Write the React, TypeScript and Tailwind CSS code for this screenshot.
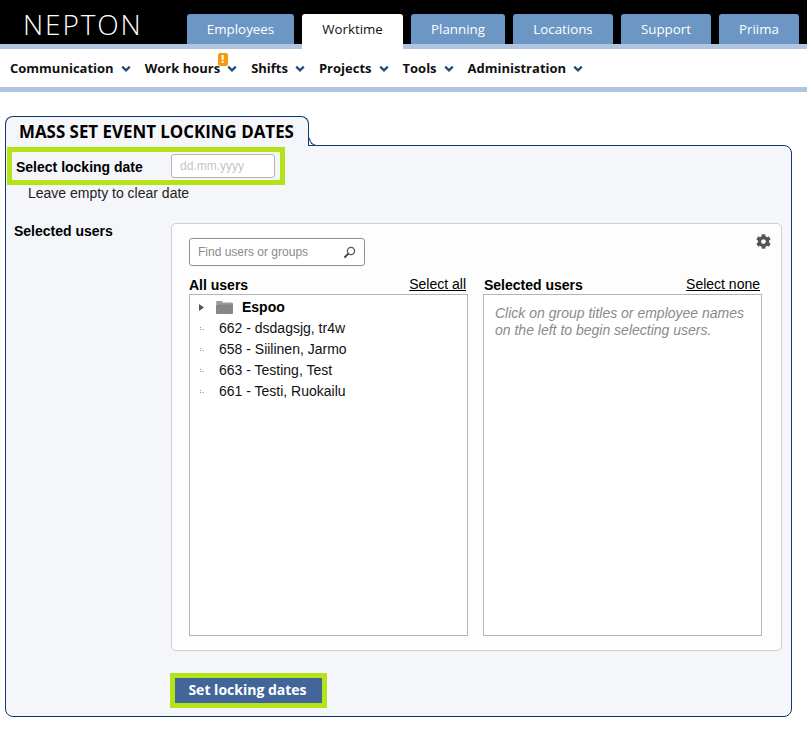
import React from 'react';
import { FaCog } from 'react-icons/fa';

const tabs = [
  { label: 'Employees', width: 'w-[107px]' },
  { label: 'Worktime', width: 'w-[101px]', active: true },
  { label: 'Planning', width: 'w-[94px]' },
  { label: 'Locations', width: 'w-[100px]' },
  { label: 'Support', width: 'w-[90px]' },
  { label: 'Priima', width: 'w-[80px]' },
];

const menu = ['Communication', 'Work hours', 'Shifts', 'Projects', 'Tools', 'Administration'];

const users = ['662 - dsdagsjg, tr4w', '658 - Siilinen, Jarmo', '663 - Testing, Test', '661 - Testi, Ruokailu'];

function Chevron() {
  return (
    <svg width="10" height="8" viewBox="0 0 10 8" className="ml-[7px]">
      <path d="M1.2 1.6 5 5.4l3.8-3.8" fill="none" stroke="#1f4a7c" strokeWidth="2.2" />
    </svg>
  );
}

function TreeDots() {
  return (
    <svg width="5" height="5" viewBox="0 0 5 5" className="ml-[10px] mr-[14px] shrink-0">
      <rect x="0" y="1" width="1" height="1" fill="#9a9a9a" />
      <rect x="0" y="3" width="1" height="1" fill="#9a9a9a" />
      <rect x="2" y="3" width="1" height="1" fill="#bdbdbd" />
      <rect x="3" y="3" width="1" height="1" fill="#bdbdbd" />
    </svg>
  );
}

function Header() {
  return (
    <div>
      <div className="flex h-[44px] bg-black">
        <div className="w-[187px] pl-[23px] pt-[5px] font-['Open_Sans',sans-serif] text-[28px] leading-[38px] font-light tracking-[1.9px] text-white">
          NEPTON
        </div>
        <div className="flex items-start gap-2 pt-[14px]">
          {tabs.map((tab) =>
            tab.active ? (
              <div
                key={tab.label}
                className={`${tab.width} relative z-10 flex h-[35px] justify-center rounded-t-[3px] bg-white pt-[6px] font-['Open_Sans',sans-serif] text-[13.33px] leading-[18px] text-[#111111]`}
              >
                {tab.label}
              </div>
            ) : (
              <div
                key={tab.label}
                className={`${tab.width} flex h-[30px] justify-center rounded-t-[3px] bg-[#6c97c4] pt-[6px] font-['Open_Sans',sans-serif] text-[13.33px] leading-[18px] text-white`}
              >
                {tab.label}
              </div>
            ),
          )}
        </div>
      </div>
      <div className="h-[5px] bg-[#b0c6e0]" />
      <div className="flex h-[38px] items-center gap-[14px] bg-white pt-[1px] pl-[10px] font-['Open_Sans',sans-serif] text-[13px] font-bold text-[#111111]">
        {menu.map((item) => (
          <div key={item} className="relative flex items-center">
            {item}
            <Chevron />
            {item === 'Work hours' && (
              <span className="absolute top-[-6px] left-[73px] flex h-[13px] w-[10px] items-center justify-center rounded-[2px] bg-[#f59a0c] text-[10px] leading-none font-extrabold text-white">
                !
              </span>
            )}
          </div>
        ))}
      </div>
      <div className="h-[5px] bg-[#b0c6e0]" />
    </div>
  );
}

function UserPicker() {
  return (
    <div className="relative h-[428px] w-[611px] rounded-[5px] border border-[#cfcfcf] bg-[#fdfdfe] pt-[14px] pl-[17px]">
      <FaCog className="absolute top-[10px] right-[10px] text-[15px] text-[#555555]" />
      <div className="flex h-[28px] w-[176px] items-center justify-between rounded-[3px] border border-[#8f8f8f] bg-white pr-[8px] pl-[8px] text-[12px] text-[#8a8a8a]">
        <span>Find users or groups</span>
        <svg width="13" height="13" viewBox="0 0 13 13">
          <circle cx="8" cy="5" r="3.6" fill="none" stroke="#555555" strokeWidth="1.3" />
          <path d="M5.4 7.6 1.4 11.6" stroke="#444444" strokeWidth="2" />
        </svg>
      </div>
      <div className="mt-[9px] flex gap-[15px]">
        <div className="w-[279px]">
          <div className="flex h-[19px] items-end justify-between pr-[2px] text-[14px] leading-[18px] text-black">
            <span className="font-bold">All users</span>
            <span className="relative top-[-1px] underline">Select all</span>
          </div>
          <div className="h-[342px] border border-[#b5b5b5] bg-white pt-[2px] text-[14px] text-[#111111]">
            <div className="flex h-[21px] items-center">
              <svg width="5" height="7" viewBox="0 0 5 7" className="ml-[9px]">
                <path d="M0 0l5 3.5L0 7z" fill="#555555" />
              </svg>
              <svg width="17" height="13" viewBox="0 0 17 13" className="ml-[12px]">
                <path d="M0 2V1.2C0 .5.5 0 1.2 0h4C6 0 6.400.5 6.800 1.500H15.500c.8 0 1.500.5 1.500 1.300V4H1.500z" fill="#9a9a9a" />
                <path d="M0 3.500h17V12c0 .6-.4 1-1 1H1c-.6 0-1-.4-1-1z" fill="#868686" />
              </svg>
              <span className="ml-[9px] font-bold text-black">Espoo</span>
            </div>
            {users.map((user) => (
              <div key={user} className="flex h-[21px] items-center">
                <TreeDots />
                {user}
              </div>
            ))}
          </div>
        </div>
        <div className="w-[279px]">
          <div className="flex h-[19px] items-end justify-between pr-[2px] pl-[1px] text-[14px] leading-[18px] text-black">
            <span className="font-bold">Selected users</span>
            <span className="relative top-[-1px] underline">Select none</span>
          </div>
          <div className="h-[342px] border border-[#b5b5b5] bg-white px-[11px] pt-[10px] text-[14px] leading-[17px] text-[#8a8a8a] italic">
            Click on group titles or employee names
            <br />
            on the left to begin selecting users.
          </div>
        </div>
      </div>
    </div>
  );
}

function MassLockingPanel() {
  return (
    <div className="px-[5px] pt-[24px]">
      <div className="relative z-10 mb-[-1px] flex h-[30px] w-[304px] rounded-t-[8px] border border-b-0 border-[#0b3a6e] bg-[#f4f6fa] pt-[4px] pl-[13px] font-['Open_Sans',sans-serif] text-[16.9px] leading-[22px] font-bold whitespace-nowrap text-black">
        MASS SET EVENT LOCKING DATES
        <div className="absolute right-[-9px] bottom-0 h-[8px] w-[8px] rounded-bl-[8px] border-b border-l border-[#0b3a6e] bg-white" />
      </div>
      <div className="h-[572px] w-[787px] rounded-tr-[8px] rounded-b-[8px] border border-[#0b3a6e] bg-[#f4f6fa] pt-[1px] pl-[1px]">
        <div className="flex h-[38px] w-[278px] items-center border-[5px] border-[#b4e31a] pl-[4px] text-[14px] font-bold text-black">
          <span className="w-[155px] pt-[2px]">Select locking date</span>
          <div className="flex h-[24px] w-[104px] items-center rounded-[3px] border border-[#b5b5b5] bg-white pl-[8px] text-[12px] font-normal text-[#c4c4c4]">
            dd.mm.yyyy
          </div>
        </div>
        <div className="pl-[21px] text-[14px] leading-[16px] text-[#222222]">Leave empty to clear date</div>
        <div className="mt-[22px] flex">
          <div className="w-[164px] pl-[7px] text-[14px] leading-[16px] font-bold text-black">Selected users</div>
          <UserPicker />
        </div>
        <div className="mt-[22px] ml-[163px] w-[157px] border-[5px] border-[#b4e31a]">
          <div className="flex h-[25px] items-center justify-center bg-[#426699] pr-[2px] pb-[2px] font-['Open_Sans',sans-serif] text-[14px] font-bold text-white">
            Set locking dates
          </div>
        </div>
      </div>
    </div>
  );
}

export default function App() {
  return (
    <div className="h-[731px] w-[807px] overflow-hidden bg-white font-['Liberation_Sans',Arial,sans-serif]">
      <Header />
      <MassLockingPanel />
    </div>
  );
}
